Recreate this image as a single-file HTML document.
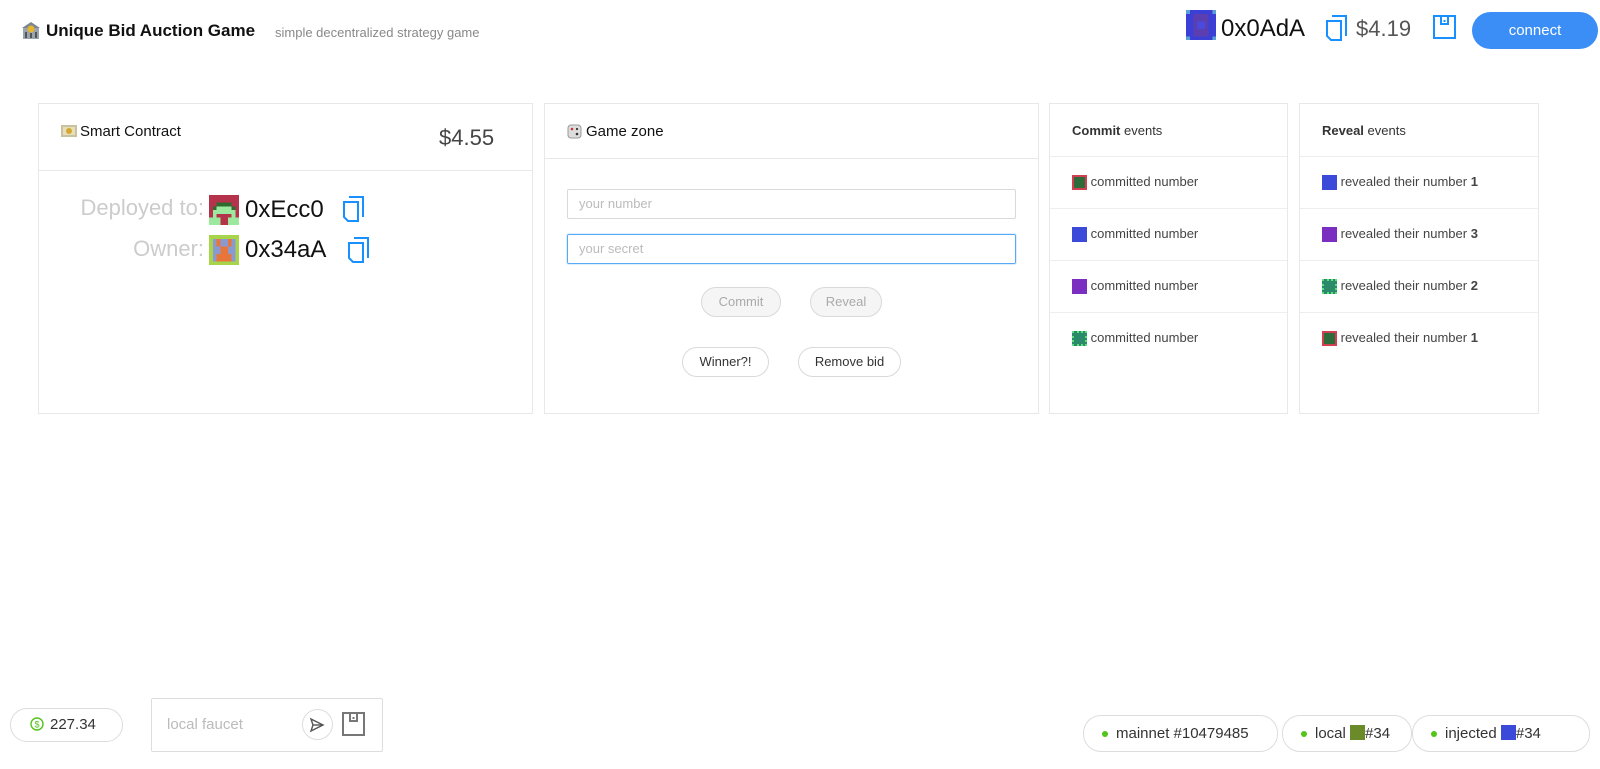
<!DOCTYPE html>
<html><head><meta charset="utf-8"><style>
*{box-sizing:border-box;margin:0;padding:0}
body{width:1600px;height:769px;background:#fff;font-family:"Liberation Sans","Noto Sans CJK SC",sans-serif;color:#222;position:relative;overflow:hidden}
.abs{position:absolute}
.card{position:absolute;border:1px solid #e8e8e8;background:#fff}
.hl{position:absolute;left:0;right:0;border-top:1px solid #e8e8e8}
.blk{display:inline-block;vertical-align:middle}
.btn{position:absolute;border:1px solid #d9d9d9;border-radius:16px;font-size:13px;text-align:center;line-height:28px;background:#fff;color:#333}
.dis{background:#f5f5f5;color:#aaa}
.inp{position:absolute;left:22px;width:449px;height:30px;border:1px solid #d9d9d9;border-radius:2px;font-size:13px;color:#bbb;padding-left:11px;line-height:28px}
.ev{position:absolute;left:22px;font-size:13px;color:#444}
.row{position:absolute;left:0;right:0;border-top:1px solid #eee}
.pill{position:absolute;border:1px solid #ddd;border-radius:18px;height:37px;font-size:15px;color:#333;line-height:35px;background:#fff}
.dot{display:inline-block;width:6px;height:6px;border-radius:3px;background:#52c41a;vertical-align:middle;margin-right:8px}
</style></head><body>
<svg class="abs" style="left:22px;top:22px" width="18" height="18" viewBox="0 0 18 18"><rect x="1" y="6" width="16" height="11" fill="#9aa4ad"/><polygon points="0,6 9,0 18,6" fill="#7c8790"/><circle cx="9" cy="7" r="3.5" fill="#e8b530"/><rect x="3" y="10" width="2" height="6" fill="#555"/><rect x="8" y="11" width="2" height="5" fill="#555"/><rect x="13" y="10" width="2" height="6" fill="#555"/></svg>
<div class="abs" style="left:46px;top:21px;font-size:17px;font-weight:bold;color:#111">Unique Bid Auction Game</div>
<div class="abs" style="left:275px;top:25px;font-size:13px;color:#888">simple decentralized strategy game</div>

<svg class="abs" style="left:1186px;top:10px" width="30" height="30" viewBox="0 0 8 8" shape-rendering="crispEdges"><rect width="8" height="8" fill="#3c3fd6"/><rect x="2" y="1" width="4" height="6" fill="#5b3fb0"/><rect x="0" y="0" width="1" height="1" fill="#5aa0d6"/><rect x="7" y="0" width="1" height="1" fill="#5aa0d6"/><rect x="0" y="7" width="1" height="1" fill="#5aa0d6"/><rect x="7" y="7" width="1" height="1" fill="#5aa0d6"/><rect x="3" y="3" width="2" height="2" fill="#4a4ae0"/></svg>
<div class="abs" style="left:1221px;top:15px;font-size:24px;color:#111">0x0AdA</div>
<svg class="abs" style="left:1325px;top:15px" width="24" height="26" viewBox="0 0 24 26" fill="none" stroke="#1890ff" stroke-width="2"><path d="M7 1h14v20"/><path d="M2 6h14v19H6l-4-4z"/></svg>
<div class="abs" style="left:1356px;top:16px;font-size:22px;color:#555">$4.19</div>
<svg class="abs" style="left:1433px;top:15px" width="23" height="24" viewBox="0 0 23 24" fill="none" stroke="#1890ff" stroke-width="2"><rect x="1" y="1" width="21" height="22"/><path d="M8 1v8h7V1"/><path d="M11.5 5v2"/></svg>
<div class="abs" style="left:1472px;top:12px;width:126px;height:37px;border-radius:19px;background:#3a8ef6;color:#fff;font-size:15px;text-align:center;line-height:37px">connect</div>

<!-- card1 -->
<div class="card" style="left:38px;top:103px;width:495px;height:311px">
<svg class="abs" style="left:22px;top:21px" width="16" height="12" viewBox="0 0 16 12"><rect width="16" height="12" fill="#c9c2a0"/><rect x="2" y="2" width="12" height="8" fill="#e6dfb8"/><circle cx="8" cy="6" r="3" fill="#d4a733"/></svg>
<div class="abs" style="left:41px;top:19px;font-size:15px;color:#111">Smart Contract</div>
<div class="abs" style="left:400px;top:21px;font-size:22px;color:#444">$4.55</div>
<div class="hl" style="top:66px"></div>
<div class="abs" style="right:328px;top:91px;font-size:22px;color:#ccc">Deployed to:</div>
<svg class="abs" style="left:170px;top:91px" width="30" height="30" viewBox="0 0 8 8" shape-rendering="crispEdges"><rect width="8" height="8" fill="#9de89f"/><rect x="0" y="0" width="8" height="3" fill="#b5334a"/><rect x="0" y="3" width="1" height="3" fill="#b5334a"/><rect x="7" y="3" width="1" height="3" fill="#b5334a"/><rect x="2" y="2" width="4" height="1" fill="#2e6b2f"/><rect x="2" y="5" width="4" height="1" fill="#b5334a"/><rect x="3" y="6" width="2" height="2" fill="#b5334a"/><rect x="1" y="3" width="1" height="1" fill="#2e6b2f"/><rect x="6" y="3" width="1" height="1" fill="#2e6b2f"/></svg>
<div class="abs" style="left:206px;top:92px;font-size:24px;color:#111">0xEcc0</div>
<svg class="abs" style="left:303px;top:92px" width="24" height="26" viewBox="0 0 24 26" fill="none" stroke="#1890ff" stroke-width="2"><path d="M7 1h14v20"/><path d="M2 6h14v19H6l-4-4z"/></svg>
<div class="abs" style="right:328px;top:132px;font-size:22px;color:#ccc">Owner:</div>
<svg class="abs" style="left:170px;top:131px" width="30" height="30" viewBox="0 0 8 8" shape-rendering="crispEdges"><rect width="8" height="8" fill="#8a9ad0"/><rect x="0" y="0" width="8" height="1" fill="#a7d44a"/><rect x="0" y="7" width="8" height="1" fill="#a7d44a"/><rect x="0" y="0" width="1" height="8" fill="#a7d44a"/><rect x="7" y="0" width="1" height="8" fill="#a7d44a"/><rect x="2" y="1" width="1" height="2" fill="#e8763a"/><rect x="5" y="1" width="1" height="2" fill="#e8763a"/><rect x="3" y="3" width="2" height="2" fill="#e8763a"/><rect x="2" y="5" width="4" height="2" fill="#e8763a"/></svg>
<div class="abs" style="left:206px;top:132px;font-size:24px;color:#111">0x34aA</div>
<svg class="abs" style="left:308px;top:133px" width="24" height="26" viewBox="0 0 24 26" fill="none" stroke="#1890ff" stroke-width="2"><path d="M7 1h14v20"/><path d="M2 6h14v19H6l-4-4z"/></svg>
</div>

<!-- card2 -->
<div class="card" style="left:544px;top:103px;width:495px;height:311px">
<svg class="abs" style="left:22px;top:20px" width="15" height="15" viewBox="0 0 15 15"><rect x="1" y="1" width="13" height="13" rx="3" fill="#ddd" stroke="#999"/><circle cx="5" cy="5" r="1.3" fill="#c33"/><circle cx="10" cy="10" r="1.3" fill="#333"/><circle cx="10" cy="5" r="1.1" fill="#333"/></svg>
<div class="abs" style="left:41px;top:19px;font-size:15px;color:#111">Game zone</div>
<div class="hl" style="top:54px"></div>
<div class="inp" style="top:85px">your number</div>
<div class="inp" style="top:130px;border-color:#5aa9f7;box-shadow:0 0 0 1px rgba(24,144,255,.15)">your secret</div>
<div class="btn dis" style="left:156px;top:183px;width:80px;height:30px">Commit</div>
<div class="btn dis" style="left:265px;top:183px;width:72px;height:30px">Reveal</div>
<div class="btn" style="left:137px;top:243px;width:87px;height:30px">Winner?!</div>
<div class="btn" style="left:253px;top:243px;width:103px;height:30px">Remove bid</div>
</div>

<!-- card3 -->
<div class="card" style="left:1049px;top:103px;width:239px;height:311px">
<div class="abs" style="left:22px;top:19px;font-size:13px;color:#333"><b>Commit</b> events</div>
<div class="row" style="top:52px"></div><div class="row" style="top:104px"></div><div class="row" style="top:156px"></div><div class="row" style="top:208px"></div>
<div class="ev" style="top:70px"><span class="blk" style="width:15px;height:15px;background:#2d6b3a;border:2px solid #d04050"></span> committed number</div>
<div class="ev" style="top:122px"><span class="blk" style="width:15px;height:15px;background:#3b4ad8"></span> committed number</div>
<div class="ev" style="top:174px"><span class="blk" style="width:15px;height:15px;background:#7a2fc0"></span> committed number</div>
<div class="ev" style="top:226px"><span class="blk" style="width:15px;height:15px;background:#2a8a6a;border:2px dotted #5ee07a"></span> committed number</div>
</div>

<!-- card4 -->
<div class="card" style="left:1299px;top:103px;width:240px;height:311px">
<div class="abs" style="left:22px;top:19px;font-size:13px;color:#333"><b>Reveal</b> events</div>
<div class="row" style="top:52px"></div><div class="row" style="top:104px"></div><div class="row" style="top:156px"></div><div class="row" style="top:208px"></div>
<div class="ev" style="top:70px"><span class="blk" style="width:15px;height:15px;background:#3b4ad8"></span> revealed their number <b>1</b></div>
<div class="ev" style="top:122px"><span class="blk" style="width:15px;height:15px;background:#7a2fc0"></span> revealed their number <b>3</b></div>
<div class="ev" style="top:174px"><span class="blk" style="width:15px;height:15px;background:#2a8a6a;border:2px dotted #5ee07a"></span> revealed their number <b>2</b></div>
<div class="ev" style="top:226px"><span class="blk" style="width:15px;height:15px;background:#2d6b3a;border:2px solid #d04050"></span> revealed their number <b>1</b></div>
</div>

<!-- bottom -->
<div class="pill" style="left:10px;top:708px;width:113px;height:34px;line-height:32px;padding-left:19px"><svg class="blk" width="14" height="14" viewBox="0 0 14 14" style="margin-right:6px;margin-top:-3px"><circle cx="7" cy="7" r="6" fill="none" stroke="#52c41a" stroke-width="1.4"/><text x="7" y="10.5" font-size="9" text-anchor="middle" fill="#52c41a" font-family="Liberation Sans">$</text></svg>227.34</div>
<div class="abs" style="left:151px;top:698px;width:232px;height:54px;border:1px solid #ddd;border-radius:2px">
<div class="abs" style="left:15px;top:17px;font-size:15px;color:#bbb">local faucet</div>
<div class="abs" style="left:150px;top:10px;width:31px;height:31px;border:1px solid #ddd;border-radius:16px"></div>
<svg class="abs" style="left:157px;top:18px" width="16" height="16" viewBox="0 0 16 16" fill="none" stroke="#555" stroke-width="1.4"><path d="M2 2l12 6-12 6 2-6z"/><path d="M4 8h10"/></svg>
<svg class="abs" style="left:190px;top:13px" width="23" height="24" viewBox="0 0 23 24" fill="none" stroke="#777" stroke-width="2"><rect x="1" y="1" width="21" height="22"/><path d="M8 1v8h7V1"/><path d="M11.5 5v2"/></svg>
</div>
<div class="pill" style="left:1083px;top:715px;width:195px;padding-left:18px"><span class="dot"></span>mainnet #10479485</div>
<div class="pill" style="left:1282px;top:715px;width:130px;padding-left:18px"><span class="dot"></span>local <span class="blk" style="width:15px;height:15px;background:#6b8a2a;margin-top:-3px"></span>#34</div>
<div class="pill" style="left:1412px;top:715px;width:178px;padding-left:18px"><span class="dot"></span>injected <span class="blk" style="width:15px;height:15px;background:#3b4ad8;margin-top:-3px"></span>#34</div>
</body></html>
